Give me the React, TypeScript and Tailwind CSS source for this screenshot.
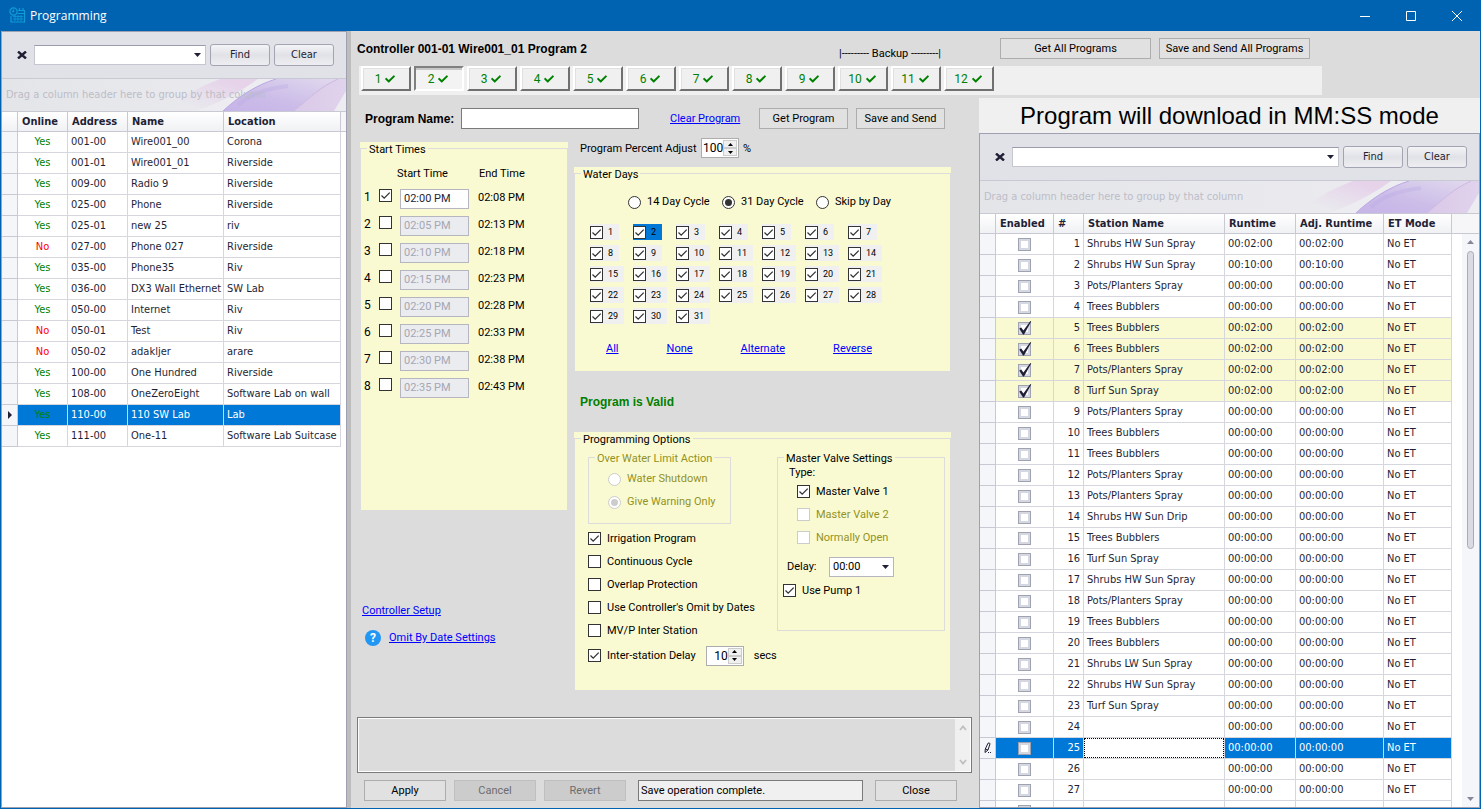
import { ReactNode, useState } from "react";
import { FaCheck } from "react-icons/fa";

type Controller = [online: string, address: string, name: string, location: string];

const CONTROLLERS: Controller[] = [
  ["Yes", "001-00", "Wire001_00", "Corona"],
  ["Yes", "001-01", "Wire001_01", "Riverside"],
  ["Yes", "009-00", "Radio 9", "Riverside"],
  ["Yes", "025-00", "Phone", "Riverside"],
  ["Yes", "025-01", "new 25", "riv"],
  ["No", "027-00", "Phone 027", "Riverside"],
  ["Yes", "035-00", "Phone35", "Riv"],
  ["Yes", "036-00", "DX3 Wall Ethernet", "SW Lab"],
  ["Yes", "050-00", "Internet", "Riv"],
  ["No", "050-01", "Test", "Riv"],
  ["No", "050-02", "adakljer", "arare"],
  ["Yes", "100-00", "One Hundred", "Riverside"],
  ["Yes", "108-00", "OneZeroEight", "Software Lab on wall"],
  ["Yes", "110-00", "110 SW Lab", "Lab"],
  ["Yes", "111-00", "One-11", "Software Lab Suitcase"],
];

const STATION_NAMES = [
  "Shrubs HW Sun Spray", "Shrubs HW Sun Spray", "Pots/Planters Spray", "Trees Bubblers",
  "Trees Bubblers", "Trees Bubblers", "Pots/Planters Spray", "Turf Sun Spray",
  "Pots/Planters Spray", "Trees Bubblers", "Trees Bubblers", "Pots/Planters Spray",
  "Pots/Planters Spray", "Shrubs HW Sun Drip", "Trees Bubblers", "Turf Sun Spray",
  "Shrubs HW Sun Spray", "Pots/Planters Spray", "Trees Bubblers", "Trees Bubblers",
  "Shrubs LW Sun Spray", "Shrubs HW Sun Spray", "Turf Sun Spray", "", "", "", "",
];

const RUNTIMES: Record<number, string> = {
  1: "00:02:00", 2: "00:10:00", 5: "00:02:00", 6: "00:02:00", 7: "00:02:00", 8: "00:02:00",
};

const START_TIMES = [
  ["02:00 PM", "02:08 PM"],
  ["02:05 PM", "02:13 PM"],
  ["02:10 PM", "02:18 PM"],
  ["02:15 PM", "02:23 PM"],
  ["02:20 PM", "02:28 PM"],
  ["02:25 PM", "02:33 PM"],
  ["02:30 PM", "02:38 PM"],
  ["02:35 PM", "02:43 PM"],
];

const PROGRAMS = Array.from({ length: 12 }, (_, i) => i + 1);
const DAYS = Array.from({ length: 31 }, (_, i) => i + 1);

function CheckBox({ id, checked, disabled, label }: { id: string; checked?: boolean; disabled?: boolean; label?: string }) {
  return (
    <span className="inline-grid size-[13px] shrink-0">
      <input
        id={id}
        type="checkbox"
        defaultChecked={checked}
        disabled={disabled}
        aria-label={label}
        className="peer col-start-1 row-start-1 size-[13px] appearance-none border border-[#333] bg-white disabled:border-[#ccc]"
      />
      <svg viewBox="0 0 13 13" className="pointer-events-none col-start-1 row-start-1 hidden size-[13px] peer-checked:block">
        <path d="M2.5 6.5 5.2 9.2 10.7 3.6" fill="none" stroke="#333" strokeWidth="1.3" />
      </svg>
    </span>
  );
}

function Option({ id, checked, disabled, children }: { id: string; checked?: boolean; disabled?: boolean; children: ReactNode }) {
  return (
    <div className="flex h-[23px] items-center gap-[6px] whitespace-nowrap">
      <CheckBox id={id} checked={checked} disabled={disabled} />
      <label htmlFor={id} className={disabled ? "text-[#929224]" : ""}>{children}</label>
    </div>
  );
}

function Radio({ id, name, checked, disabled, children }: { id: string; name: string; checked?: boolean; disabled?: boolean; children: ReactNode }) {
  return (
    <div className="flex items-center gap-[6px]">
      <input
        id={id}
        type="radio"
        name={name}
        defaultChecked={checked}
        disabled={disabled}
        className="grid size-[13px] appearance-none place-items-center rounded-full border border-[#333] bg-white before:size-[7px] before:rounded-full checked:before:bg-[#333] disabled:border-[#ccc] disabled:checked:before:bg-[#ccc]"
      />
      <label htmlFor={id} className={disabled ? "text-[#929224]" : ""}>{children}</label>
    </div>
  );
}

function Link({ children }: { children: ReactNode }) {
  return <a href="#" className="text-[#0000ff] underline">{children}</a>;
}

function PushButton({ className, disabled, children }: { className: string; disabled?: boolean; children: ReactNode }) {
  return (
    <button
      type="button"
      disabled={disabled}
      className={`h-[21px] shrink-0 border border-[#adadad] bg-[#e1e1e1] disabled:border-[#bfbfbf] disabled:bg-[#ccc] disabled:text-[#6d6d6d] ${className}`}
    >
      {children}
    </button>
  );
}

function GroupBox({ title, className, disabled, children }: { title: string; className?: string; disabled?: boolean; children: ReactNode }) {
  return (
    <fieldset className={`border border-[#dcdcdc] ${className ?? ""}`}>
      <legend className={`ml-[6px] h-[13px] px-[2px] leading-[15px] ${disabled ? "text-[#929224]" : ""}`}>{title}</legend>
      {children}
    </fieldset>
  );
}

function Spinner({ id, value, label }: { id: string; value: number; label?: string }) {
  const [count, setCount] = useState(value);
  return (
    <span className="flex h-[20px] w-[38px] border border-[#adadad] bg-white p-px">
      <input
        id={id}
        type="number"
        value={count}
        aria-label={label}
        onChange={(event) => setCount(Number(event.target.value))}
        className="w-[20px] text-right text-xs leading-[14px] outline-none [appearance:textfield] [&::-webkit-inner-spin-button]:appearance-none"
      />
      <span className="flex flex-1 flex-col">
        <button type="button" aria-label="Increase" onClick={() => setCount(count + 1)} className="grid flex-1 place-items-center border border-[#ccc] bg-[#f0f0f0]">
          <svg viewBox="0 0 5 3" className="h-[3px] w-[5px]"><path d="M0 3 2.5 0 5 3z" /></svg>
        </button>
        <button type="button" aria-label="Decrease" onClick={() => setCount(count - 1)} className="grid flex-1 place-items-center border border-[#ccc] bg-[#f0f0f0]">
          <svg viewBox="0 0 5 3" className="h-[3px] w-[5px]"><path d="M0 0h5L2.5 3z" /></svg>
        </button>
      </span>
    </span>
  );
}

function DropArrow() {
  return <svg viewBox="0 0 7 4" className="pointer-events-none h-[4px] w-[7px]"><path d="M0 0h7L3.5 4z" fill="#1f1f35" /></svg>;
}

function SearchBar({ name }: { name: string }) {
  return (
    <div className="flex h-[47px] shrink-0 items-center border-b border-[#c8c9d2] bg-[#e1e2e7] pl-[14px] pr-[12px] text-[#1f1f35]">
      <button type="button" aria-label="Close search" className="grid size-[12px] place-items-center">
        <svg viewBox="0 0 10 8" className="h-[8px] w-[10px]"><path d="M1 .5 9 7.5M9 .5 1 7.5" stroke="#1f1f35" strokeWidth="2.4" /></svg>
      </button>
      <div className="ml-[6px] flex h-[20px] min-w-0 flex-1 items-center border border-[#c5c6d0] border-t-[#9a9bab] bg-white pr-[4px]">
        <input type="text" aria-label={`Search ${name}`} className="min-w-0 flex-1 px-1 outline-none" />
        <DropArrow />
      </div>
      {["Find", "Clear"].map((text) => (
        <button
          key={text}
          type="button"
          className="ml-[4px] h-[22px] w-[60px] rounded-[3px] border border-[#a3a4b1] bg-linear-to-b from-[#f4f4f7] via-[#e1e2e7] to-[#eeeef2]"
        >
          {text}
        </button>
      ))}
    </div>
  );
}

function GroupPanel({ id }: { id: string }) {
  return (
    <div className="relative flex h-[33px] shrink-0 items-center overflow-hidden border-b border-[#c8c9d2] bg-linear-to-r from-[#e4e5e9] to-[#ececf1] pl-[4px]">
      <svg viewBox="0 0 200 32" className="absolute right-0 h-[32px] w-[200px]">
        <defs>
          <linearGradient id={`${id}-pink`} x1="0" y1="1" x2="1" y2="0">
            <stop offset="0.2" stopColor="#e6d3ea" stopOpacity="0" />
            <stop offset="0.8" stopColor="#e6d3ea" />
          </linearGradient>
          <linearGradient id={`${id}-violet`} x1="0" y1="1" x2="1" y2="0">
            <stop offset="0" stopColor="#c6b4e8" />
            <stop offset=".4" stopColor="#cbbce8" />
            <stop offset="1" stopColor="#e2d9ee" />
          </linearGradient>
          <linearGradient id={`${id}-orchid`} x1="0" x2="1">
            <stop offset="0" stopColor="#dac8e8" />
            <stop offset="1" stopColor="#e0d3ec" />
          </linearGradient>
        </defs>
        <path d="M20 32C32 20 52 8 74 0H112C96 12 74 24 50 32z" fill={`url(#${id}-pink)`} />
        <path d="M112 0C96 12 74 24 50 32H77C92 18 110 6 130 0z" fill="#ececf1" />
        <path d="M77 32C92 18 110 6 130 0H192C174 8 162 20 148 32z" fill={`url(#${id}-violet)`} />
        <path d="M77 32C92 18 110 6 130 0" fill="none" stroke="#bba8e4" />
        <path d="M92 26C106 14 120 10 142 7" fill="none" stroke="#bba9e6" strokeWidth="4" opacity=".35" />
        <path d="M148 32C162 20 174 8 192 0H200V12L188 32z" fill={`url(#${id}-orchid)`} />
        <path d="M148 32C162 20 174 8 192 0" fill="none" stroke="#cdb7e0" />
      </svg>
      <span className="relative whitespace-nowrap text-[#bcbdc8]">Drag a column header here to group by that column</span>
    </div>
  );
}

function HeaderCell({ children }: { children?: ReactNode }) {
  return <th className="h-[20px] overflow-hidden whitespace-nowrap border-r border-b border-[#c8c9d2] bg-linear-to-b from-white to-[#f0f1f4] px-[4px] py-0 text-left font-bold leading-[18px]">{children}</th>;
}

function ControllerList() {
  return (
    <aside className="flex w-[346px] shrink-0 flex-col border border-[#a0a1b0] bg-white font-['DejaVu_Sans_Condensed','Noto_Sans',sans-serif] text-[11px] text-[#1f1f35]">
      <SearchBar name="controllers" />
      <GroupPanel id="controllers" />
      <table className="w-full table-fixed border-separate border-spacing-0">
        <colgroup>
          <col className="w-[16px]" />
          <col className="w-[50px]" />
          <col className="w-[60px]" />
          <col className="w-[96px]" />
          <col className="w-[117px]" />
          <col />
        </colgroup>
        <thead>
          <tr>
            <HeaderCell />
            <HeaderCell>Online</HeaderCell>
            <HeaderCell>Address</HeaderCell>
            <HeaderCell>Name</HeaderCell>
            <HeaderCell>Location</HeaderCell>
            <th className="border-b border-[#c8c9d2] bg-[#f6f6f9] p-0" />
          </tr>
        </thead>
        <tbody>
          {CONTROLLERS.map(([online, address, name, location]) => {
            const selected = address === "110-00";
            const cell = `h-[21px] whitespace-nowrap border-r border-b border-[#d5d6de] px-[3px] py-0 leading-[20px] ${selected ? "bg-[#0078d7] text-white" : ""}`;
            return (
              <tr key={address}>
                <td className="border-r border-b border-[#c8c9d2] bg-[#f5f6f9] p-0">
                  {selected && <svg viewBox="0 0 4 8" className="ml-[6px] h-[8px] w-[4px]"><path d="M0 0 4 4 0 8z" fill="#1f1f35" /></svg>}
                </td>
                <td className={`${cell} text-center`}>
                  <span className={online === "Yes" ? "text-[#008000]" : "text-[#ff0000]"}>{online}</span>
                </td>
                <td className={cell}>{address}</td>
                <td className={cell}>{name}</td>
                <td className={cell}>{location}</td>
                <td className="p-0" />
              </tr>
            );
          })}
        </tbody>
      </table>
    </aside>
  );
}

function GridCheck({ id, checked }: { id: string; checked: boolean }) {
  return (
    <span className="mx-auto grid size-[13px]">
      <input
        id={id}
        type="checkbox"
        aria-label={`Enable ${id}`}
        defaultChecked={checked}
        className="peer col-start-1 row-start-1 size-[13px] appearance-none border border-[#9fa2b0] bg-white shadow-[inset_0_0_0_2px_#d5d8e0]"
      />
      <svg viewBox="0 0 13 13" className="pointer-events-none col-start-1 row-start-1 hidden size-[13px] overflow-visible peer-checked:block">
        <path d="M1.2 6.4 3.2 5.4 5.4 8.6 12.4-1 13.2-.6 6 12.4 5 12.4z" fill="#1f1f35" />
      </svg>
    </span>
  );
}

function StationList() {
  return (
    <section className="relative flex min-h-0 flex-1 flex-col overflow-hidden border border-[#a0a1b0] bg-white font-['DejaVu_Sans_Condensed','Noto_Sans',sans-serif] text-[11px] text-[#1f1f35]">
      <SearchBar name="stations" />
      <GroupPanel id="stations" />
      <table className="w-full table-fixed border-separate border-spacing-0">
        <colgroup>
          <col className="w-[16px]" />
          <col className="w-[58px]" />
          <col className="w-[30px]" />
          <col className="w-[141px]" />
          <col className="w-[71px]" />
          <col className="w-[88px]" />
          <col className="w-[68px]" />
          <col />
        </colgroup>
        <thead>
          <tr>
            <HeaderCell />
            <HeaderCell>Enabled</HeaderCell>
            <HeaderCell>#</HeaderCell>
            <HeaderCell>Station Name</HeaderCell>
            <HeaderCell>Runtime</HeaderCell>
            <HeaderCell>Adj. Runtime</HeaderCell>
            <HeaderCell>ET Mode</HeaderCell>
            <th className="border-b border-[#c8c9d2] bg-[#f6f6f9] p-0" />
          </tr>
        </thead>
        <tbody>
          {STATION_NAMES.map((name, index) => {
            const station = index + 1;
            const enabled = station >= 5 && station <= 8;
            const selected = station === 25;
            const runtime = RUNTIMES[station] ?? "00:00:00";
            const tone = selected ? "bg-[#0078d7] text-white" : enabled ? "bg-[#fafad2]" : "";
            const cell = `h-[21px] whitespace-nowrap border-r border-b border-[#d5d6de] px-[3px] py-0 leading-[20px] ${tone}`;
            return (
              <tr key={station}>
                <td className="border-r border-b border-[#c8c9d2] bg-[#f5f6f9] p-0">
                  {selected && (
                    <svg viewBox="0 0 8 12" className="ml-[4px] h-[12px] w-[8px]">
                      <path d="M1 10.5 1.3 7 4 1.2Q5.6.4 6 1.8L4 8 1 10.500M1.300 7 4 8" fill="none" stroke="#1f1f35" />
                      <path d="M4 10.5h1M6 10.5h1" stroke="#1f1f35" />
                    </svg>
                  )}
                </td>
                <td className={cell}><GridCheck id={`station-${station}`} checked={enabled} /></td>
                <td className={`${cell} text-right`}>{station}</td>
                {selected ? (
                  <td className="border-r border-b border-[#d5d6de] p-0">
                    <input type="text" aria-label="Station name" className="block h-[20px] w-full border border-dotted border-black bg-white px-[3px] outline-none" />
                  </td>
                ) : (
                  <td className={cell}>{name}</td>
                )}
                <td className={cell}>{runtime}</td>
                <td className={cell}>{runtime}</td>
                <td className={cell}>No ET</td>
                <td className="p-0" />
              </tr>
            );
          })}
          <tr>
            <td className="h-[21px] border-r border-[#c8c9d2] bg-[#f5f6f9] p-0" />
            <td className="border-r border-[#d5d6de] p-0"><GridCheck id="station-28" checked={false} /></td>
            <td className="border-r border-[#d5d6de] p-0" />
            <td className="border-r border-[#d5d6de] p-0" />
            <td className="border-r border-[#d5d6de] p-0" />
            <td className="border-r border-[#d5d6de] p-0" />
            <td className="border-r border-[#d5d6de] p-0" />
            <td className="p-0" />
          </tr>
        </tbody>
      </table>
      <div className="absolute right-0 top-[100px] bottom-0 flex w-[17px] flex-col items-center bg-[#f5f6f9] py-[6px]">
        <svg viewBox="0 0 7 4" className="h-[4px] w-[7px]"><path d="M0 4 3.5 0 7 4z" fill="#85879a" /></svg>
        <div className="mt-[7px] h-[298px] w-[7px] rounded-full border border-[#a8aab8] bg-[#d9dae2]" />
        <svg viewBox="0 0 7 4" className="mt-auto h-[4px] w-[7px]"><path d="M0 0h7L3.5 4z" fill="#85879a" /></svg>
      </div>
    </section>
  );
}

function StartTimes() {
  return (
    <div className="bg-[#fafad2]">
      <GroupBox title="Start Times" className="h-[369px]">
        <div className="mt-[12px] flex h-[14px] items-center pl-[36px]">
          <span className="w-[82px]">Start Time</span>
          <span>End Time</span>
        </div>
        <div className="mt-[8px] flex flex-col gap-[7px]">
          {START_TIMES.map(([start, end], index) => {
            const enabled = index === 0;
            return (
              <div key={start} className="flex h-[20px] pl-[3px]">
                <label htmlFor={`start-${index}`} className="w-[15px] text-xs">{index + 1}</label>
                <CheckBox id={`start-${index}`} checked={enabled} />
                <input
                  type="text"
                  aria-label={`Start time ${index + 1}`}
                  defaultValue={start}
                  disabled={!enabled}
                  className="ml-[8px] w-[69px] border border-[#b5b6c0] bg-white px-[3px] font-['Roboto',sans-serif] text-[11px] text-[#1f1f35] disabled:bg-[#ebecef] disabled:text-[#a5a6b4]"
                />
                <span className="ml-[9px] leading-[18px]">{end}</span>
              </div>
            );
          })}
        </div>
      </GroupBox>
    </div>
  );
}

function WaterDays() {
  return (
    <div className="bg-[#fafad2]">
      <GroupBox title="Water Days" className="h-[205px]">
        <div className="mt-[15px] ml-[53px] grid w-[282px] grid-cols-3">
          <Radio id="cycle-14" name="cycle">14 Day Cycle</Radio>
          <Radio id="cycle-31" name="cycle" checked>31 Day Cycle</Radio>
          <Radio id="cycle-skip" name="cycle">Skip by Day</Radio>
        </div>
        <div className="mt-[15px] ml-[15px] grid w-[301px] grid-cols-7 gap-y-[5px]">
          {DAYS.map((day) => (
            <div
              key={day}
              className={`flex h-[16px] items-center gap-[5px] ${day < 10 ? "w-[29px]" : "w-[34px]"} ${day === 2 ? "bg-[#0078d7]" : "bg-[#f0f0f0]"}`}
            >
              <CheckBox id={`day-${day}`} checked />
              <label htmlFor={`day-${day}`} className="text-[9px]">{day}</label>
            </div>
          ))}
        </div>
        <div className="mt-[18px] flex justify-between pl-[31px] pr-[78px]">
          <Link>All</Link>
          <Link>None</Link>
          <Link>Alternate</Link>
          <Link>Reverse</Link>
        </div>
      </GroupBox>
    </div>
  );
}

function ProgrammingOptions() {
  return (
    <div className="bg-[#fafad2]">
      <GroupBox title="Programming Options" className="h-[259px]">
        <div className="mt-[6px] flex pl-[13px] pr-[5px]">
          <div className="min-w-0 flex-1">
            <GroupBox title="Over Water Limit Action" className="h-[73px] w-[143px]" disabled>
              <div className="mt-[8px] flex flex-col gap-[9px] pl-[19px]">
                <Radio id="limit-shutdown" name="limit" disabled>Water Shutdown</Radio>
                <Radio id="limit-warning" name="limit" checked disabled>Give Warning Only</Radio>
              </div>
            </GroupBox>
            <div className="mt-[3px]">
              <Option id="irrigation" checked>Irrigation Program</Option>
              <Option id="continuous">Continuous Cycle</Option>
              <Option id="overlap">Overlap Protection</Option>
              <Option id="omit-dates">Use Controller's Omit by Dates</Option>
              <Option id="mvp">MV/P Inter Station</Option>
            </div>
            <div className="mt-[2px] flex items-center gap-[10px]">
              <Option id="interstation" checked>Inter-station Delay</Option>
              <Spinner id="delay-secs" value={10} label="Inter-station delay" />
              <span>secs</span>
            </div>
          </div>
          <GroupBox title="Master Valve Settings" className="h-[180px] w-[168px] shrink-0">
            <p className="mt-[2px] pl-[11px]">Type:</p>
            <div className="pl-[19px]">
              <Option id="mv-1" checked>Master Valve 1</Option>
              <Option id="mv-2" disabled>Master Valve 2</Option>
              <Option id="mv-open" disabled>Normally Open</Option>
            </div>
            <div className="mt-[8px] flex items-center pl-[9px]">
              <label htmlFor="valve-delay" className="w-[42px]">Delay:</label>
              <span className="grid items-center">
                <select
                  id="valve-delay"
                  className="col-start-1 row-start-1 h-[20px] w-[65px] appearance-none border border-[#b5b6c0] bg-white px-[3px] font-['Roboto',sans-serif] text-[11px] outline-none"
                >
                  <option>00:00</option>
                </select>
                <span className="pointer-events-none col-start-1 row-start-1 mr-[5px] justify-self-end"><DropArrow /></span>
              </span>
            </div>
            <div className="mt-[2px] pl-[5px]">
              <Option id="pump-1" checked>Use Pump 1</Option>
            </div>
          </GroupBox>
        </div>
      </GroupBox>
    </div>
  );
}

function ProgramEditor() {
  return (
    <div className="flex w-[628px] shrink-0 flex-col">
      <div className="mt-[13px] flex items-center pl-[14px]">
        <label htmlFor="program-name" className="w-[96px] font-['Liberation_Sans',sans-serif] text-xs font-bold">Program Name:</label>
        <input id="program-name" type="text" className="h-[21px] w-[178px] border border-[#7a7a7a] bg-white px-1 outline-none" />
        <span className="w-[120px] pl-[31px]"><Link>Clear Program</Link></span>
        <PushButton className="w-[89px]">Get Program</PushButton>
        <PushButton className="ml-[8px] w-[89px]">Save and Send</PushButton>
      </div>
      <div className="mt-[9px] flex flex-1 gap-[6px] pl-[9px]">
        <div className="w-[208px] pt-[4px]">
          <StartTimes />
          <div className="mt-[93px] flex flex-col gap-[12px] pl-[2px]">
            <div className="flex"><Link>Controller Setup</Link></div>
            <div className="flex items-center gap-[8px] pl-[3px]">
              <span className="grid size-4 place-items-center rounded-full bg-[#2196f3] text-xs font-bold text-white">?</span>
              <Link>Omit By Date Settings</Link>
            </div>
          </div>
        </div>
        <div className="w-[377px]">
          <div className="flex h-[29px] items-start pl-[6px]">
            <label htmlFor="percent-adjust" className="w-[121px] pt-[4px]">Program Percent Adjust</label>
            <Spinner id="percent-adjust" value={100} />
            <span className="pl-[4px] pt-[4px]">%</span>
          </div>
          <WaterDays />
          <p className="mt-[23px] mb-[23px] pl-[6px] font-['Liberation_Sans',sans-serif] text-xs leading-[14px] font-bold text-[#008000]">Program is Valid</p>
          <ProgrammingOptions />
        </div>
      </div>
      <div className="mr-[7px] ml-[6px] flex h-[56px] border border-[#7a7a7a] bg-white p-px">
        <textarea aria-label="Messages" readOnly className="flex-1 resize-none bg-[#dcdcdc] outline-none" />
        <div className="flex w-[15px] flex-col items-center justify-between bg-[#f0f0f0] py-[6px]">
          <svg viewBox="0 0 8 6" className="h-[6px] w-[8px]"><path d="M1 5 4 1.5 7 5" fill="none" stroke="#bfbfbf" strokeWidth="1.8" /></svg>
          <svg viewBox="0 0 8 6" className="h-[6px] w-[8px]"><path d="M1 1 4 4.5 7 1" fill="none" stroke="#bfbfbf" strokeWidth="1.8" /></svg>
        </div>
      </div>
      <div className="mt-[7px] mb-[7px] flex gap-[8px] pl-[13px]">
        <PushButton className="w-[82px]">Apply</PushButton>
        <PushButton className="w-[82px]" disabled>Cancel</PushButton>
        <PushButton className="w-[82px]" disabled>Revert</PushButton>
        <input
          type="text"
          readOnly
          aria-label="Status"
          value="Save operation complete."
          className="mx-[4px] h-[21px] w-[225px] border border-[#7a7a7a] bg-[#f0f0f0] px-[2px] outline-none"
        />
        <PushButton className="w-[82px]">Close</PushButton>
      </div>
    </div>
  );
}

function ProgramTabs() {
  const [active, setActive] = useState(2);
  return (
    <div className="mr-[158px] ml-[8px] flex h-[29px] shrink-0 gap-[3px] bg-[#f0f0f0] pl-[2px]">
      {PROGRAMS.map((program) => (
        <button
          key={program}
          type="button"
          onClick={() => setActive(program)}
          className={`flex h-[25px] w-[50px] items-center justify-center gap-[4px] border-2 pr-[2px] text-xs text-[#008000] ${
            program === active
              ? "border-t-[#808080] border-l-[#808080] border-r-white border-b-white bg-[#f3f3f3] shadow-[inset_0_2px_0_#c8c8c8]"
              : "border-t-white border-l-white border-r-[#707070] border-b-[#707070] bg-[#f0f0f0] shadow-[inset_1px_1px_0_#e0e0e0]"
          }`}
        >
          {program}
          <FaCheck className="size-[10px]" />
        </button>
      ))}
    </div>
  );
}

export default function App() {
  return (
    <div className="flex h-screen flex-col overflow-hidden border-x border-b border-[#0063b1] bg-[#dcdcdc] font-['Roboto',sans-serif] text-[11px] leading-[14px] text-black">
      <header className="flex h-[31px] shrink-0 items-center bg-[#0063b1] pl-[8px] text-white">
        <svg viewBox="0 0 17 17" className="size-[17px]" fill="none" stroke="#0f9bd8">
          <path d="M9 3.500h6.500v11.500H2V9" strokeWidth="1.2" />
          <circle cx="4.500" cy="4.500" r="3.600" strokeWidth="1.2" />
          <path d="M4.500 2.500v2.200H3M10.500 1v3M14 1v3M8.500 6.500h7" strokeWidth="1.2" />
          <path d="M4 9.500h10M4 12h10M6 8v6M9 8v6M12 8v6" strokeWidth=".8" />
        </svg>
        <h1 className="ml-[4px] font-['Open_Sans',sans-serif] text-xs">Programming</h1>
        <div className="ml-auto flex">
          <button type="button" aria-label="Minimize" className="grid h-[31px] w-[46px] place-items-center">
            <svg viewBox="0 0 10 10" className="size-[10px]"><path d="M0 5.500h10" stroke="#fff" /></svg>
          </button>
          <button type="button" aria-label="Maximize" className="grid h-[31px] w-[46px] place-items-center">
            <svg viewBox="0 0 10 10" className="size-[10px]"><path d="M.5.5h9v9h-9z" fill="none" stroke="#fff" /></svg>
          </button>
          <button type="button" aria-label="Close window" className="grid h-[31px] w-[46px] place-items-center">
            <svg viewBox="0 0 10 10" className="size-[10px]"><path d="M0 0 10 10M10 0 0 10" stroke="#fff" /></svg>
          </button>
        </div>
      </header>
      <div className="flex min-h-0 flex-1">
        <ControllerList />
        <div className="w-[4px] shrink-0 bg-[#bdbdbd]" />
        <main className="flex min-w-0 flex-1 flex-col">
          <div className="flex h-[35px] shrink-0 items-center pr-[170px] pl-[6px]">
            <h2 className="font-['Liberation_Sans',sans-serif] text-xs font-bold">Controller 001-01 Wire001_01 Program 2</h2>
            <span className="ml-auto self-end pr-[59px] pb-[5px]">|--------- Backup ---------|</span>
            <PushButton className="w-[151px]">Get All Programs</PushButton>
            <PushButton className="ml-[8px] w-[151px]">Save and Send All Programs</PushButton>
          </div>
          <ProgramTabs />
          <div className="flex min-h-0 flex-1">
            <ProgramEditor />
            <div className="flex min-w-0 flex-1 flex-col pt-[3px]">
              <p className="shrink-0 bg-[#f0f0f0] text-center font-['Liberation_Sans',sans-serif] text-2xl leading-[35px]">Program will download in MM:SS mode</p>
              <StationList />
            </div>
          </div>
        </main>
      </div>
    </div>
  );
}
